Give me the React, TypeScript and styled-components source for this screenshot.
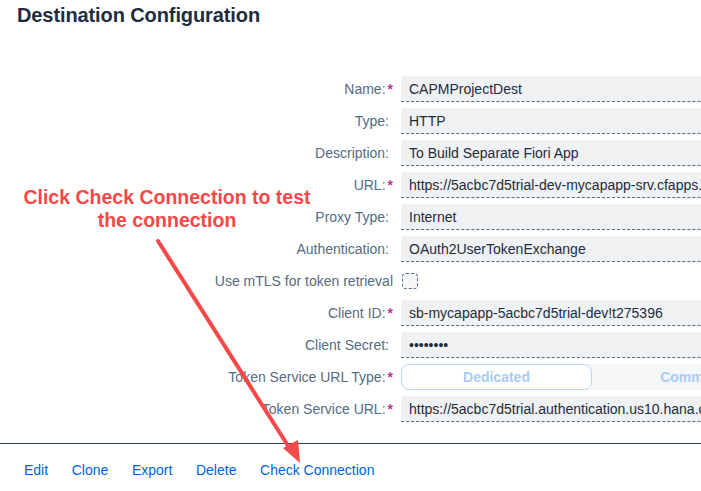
import React from "react";
import styled, { createGlobalStyle } from "styled-components";

const Global = createGlobalStyle`
  html, body { margin: 0; padding: 0; background: #ffffff; }
  body { font-family: "Liberation Sans", Arial, sans-serif; }
`;

const Page = styled.div`
  position: relative;
  width: 701px;
  height: 491px;
  overflow: hidden;
  background: #fff;
`;

const Title = styled.h1`
  margin: 0;
  padding: 4px 0 0 17px;
  height: 26px;
  font-size: 20px;
  font-weight: 700;
  line-height: 22px;
  letter-spacing: -0.1px;
  color: #1d2d3e;
`;

const Form = styled.div`
  display: grid;
  grid-template-columns: 393px 420px;
  column-gap: 8px;
  row-gap: 6px;
  margin-top: 46px;
`;

const Label = styled.div`
  display: flex;
  align-items: center;
  justify-content: flex-end;
  height: 26px;
  font-size: 14px;
  color: #556b82;
  white-space: nowrap;
`;

const Req = styled.span`
  color: #c0399f;
  font-weight: 700;
  margin-left: 2px;
`;

const Spacer = styled.span`
  display: inline-block;
  width: 4px;
`;

const Field = styled.div`
  box-sizing: border-box;
  height: 26px;
  display: flex;
  align-items: center;
  padding: 0 8px;
  background: #eff1f2;
  border-radius: 4px 4px 0 0;
  border-bottom: 1px dashed #556b82;
  font-size: 14px;
  color: #1d2d3e;
  white-space: nowrap;
  overflow: hidden;
`;

const CheckCell = styled.div`
  height: 26px;
  display: flex;
  align-items: center;
  padding-left: 1px;
`;

const Check = styled.div`
  box-sizing: border-box;
  width: 16px;
  height: 16px;
  border: 1px dashed #556b82;
  border-radius: 4px;
  background: #f5f6f7;
`;

const Segmented = styled.div`
  box-sizing: border-box;
  height: 26px;
  display: grid;
  grid-template-columns: 191px 197px;
  background: #f5f6f7;
  border-radius: 8px;
`;

const SegButton = styled.div<{ $selected?: boolean }>`
  box-sizing: border-box;
  display: flex;
  align-items: center;
  justify-content: center;
  height: 26px;
  font-size: 14px;
  font-weight: 700;
  color: #a9cbf1;
  background: ${(p) => (p.$selected ? "#ffffff" : "transparent")};
  border: 1px solid ${(p) => (p.$selected ? "#b9d6f5" : "transparent")};
  border-radius: 8px;
`;

const Divider = styled.div`
  margin-top: 21px;
  height: 1px;
  background: #2c3e50;
`;

const Footer = styled.div`
  display: flex;
  padding: 0 0 0 24px;
  height: 52px;
  align-items: center;
`;

const Link = styled.span`
  font-size: 14px;
  color: #0064d9;
  margin-right: 23.6px;
`;

const Callout = styled.div`
  position: absolute;
  left: 7px;
  top: 186px;
  width: 320px;
  text-align: center;
  font-size: 19.5px;
  font-weight: 700;
  line-height: 23px;
  color: #f54848;
`;

const Arrow = styled.svg`
  position: absolute;
  left: 0;
  top: 0;
  pointer-events: none;
`;

const rows: { label: string; req?: boolean; value?: string; kind?: "check" | "seg" }[] = [
  { label: "Name:", req: true, value: "CAPMProjectDest" },
  { label: "Type:", value: "HTTP" },
  { label: "Description:", value: "To Build Separate Fiori App" },
  { label: "URL:", req: true, value: "https://5acbc7d5trial-dev-mycapapp-srv.cfapps.us10-001.hana.ondemand.com" },
  { label: "Proxy Type:", value: "Internet" },
  { label: "Authentication:", value: "OAuth2UserTokenExchange" },
  { label: "Use mTLS for token retrieval", kind: "check" },
  { label: "Client ID:", req: true, value: "sb-mycapapp-5acbc7d5trial-dev!t275396" },
  { label: "Client Secret:", value: "••••••••" },
  { label: "Token Service URL Type:", req: true, kind: "seg" },
  { label: "Token Service URL:", req: true, value: "https://5acbc7d5trial.authentication.us10.hana.ondemand.com" },
];

export default function App() {
  return (
    <Page>
      <Global />
      <Title>Destination Configuration</Title>
      <Form>
        {rows.map((r) => (
          <React.Fragment key={r.label}>
            <Label>
              {r.label}
              {r.req && <Req>*</Req>}
              {!r.req && r.kind !== "check" && <Spacer />}
            </Label>
            {r.kind === "check" ? (
              <CheckCell>
                <Check />
              </CheckCell>
            ) : r.kind === "seg" ? (
              <Segmented>
                <SegButton $selected>Dedicated</SegButton>
                <SegButton>Common</SegButton>
              </Segmented>
            ) : (
              <Field>{r.value}</Field>
            )}
          </React.Fragment>
        ))}
      </Form>
      <Divider />
      <Footer>
        <Link>Edit</Link>
        <Link>Clone</Link>
        <Link>Export</Link>
        <Link>Delete</Link>
        <Link>Check Connection</Link>
      </Footer>
      <Callout>
        Click Check Connection to test
        <br />
        the connection
      </Callout>
      <Arrow width="701" height="491" viewBox="0 0 701 491">
        <line x1="158" y1="241" x2="292" y2="452" stroke="#f54848" strokeWidth="4" strokeLinecap="round" />
        <polygon points="300,463 283,448 298,440" fill="#f54848" />
      </Arrow>
    </Page>
  );
}
